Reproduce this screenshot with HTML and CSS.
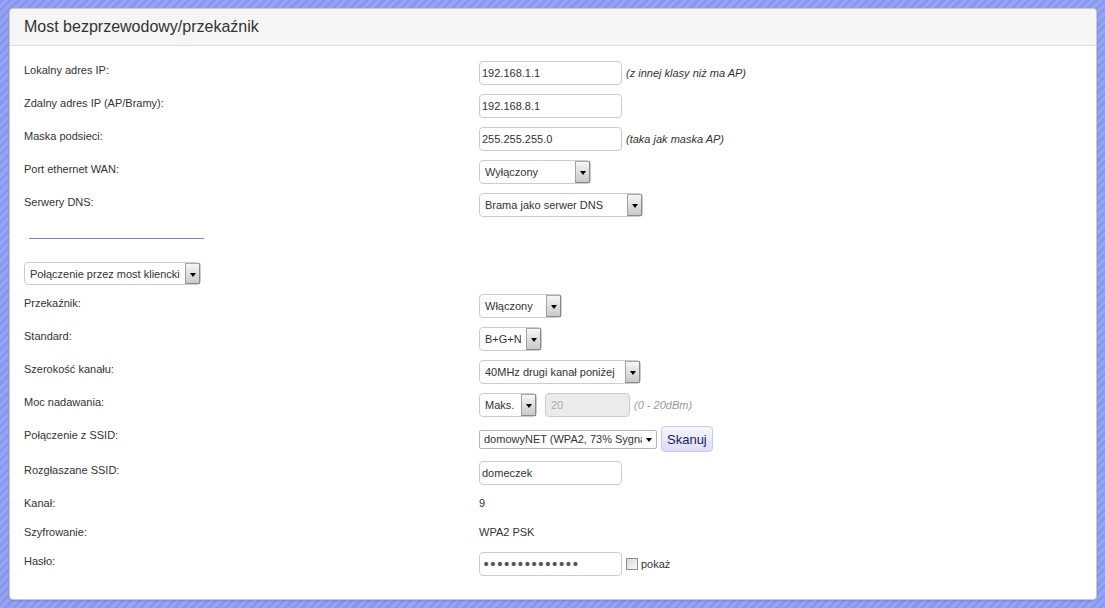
FILE: index.html
```html
<!DOCTYPE html>
<html lang="pl">

<head>
    <meta charset="UTF-8">
    <title>Most bezprzewodowy/przekaźnik</title>
    <link rel="stylesheet" href="styles.css">
</head>

<body>

    <div class="panel">
        <div class="panel-head">
            <h3>Most bezprzewodowy/przekaźnik</h3>
        </div>

        <div class="panel-body">
            <div class="row">
                <label for="lanIp">Lokalny adres IP:</label>
                <div class="ctl">
                    <input type="text" id="lanIp" class="txt" value="192.168.1.1">
                    <em class="note">(z innej klasy niż ma AP)</em>
                </div>
            </div>
            <div class="row">
                <label for="gwIp">Zdalny adres IP (AP/Bramy):</label>
                <div class="ctl">
                    <input type="text" id="gwIp" class="txt" value="192.168.8.1">
                </div>
            </div>
            <div class="row">
                <label for="mask">Maska podsieci:</label>
                <div class="ctl">
                    <input type="text" id="mask" class="txt" value="255.255.255.0">
                    <em class="note">(taka jak maska AP)</em>
                </div>
            </div>
            <div class="row">
                <label for="wan">Port ethernet WAN:</label>
                <div class="ctl">
                    <span class="dd dd-wan">
                        <select id="wan">
                            <option>Wyłączony</option>
                            <option>Włączony</option>
                        </select>
                    </span>
                </div>
            </div>
            <div class="row">
                <label for="dns">Serwery DNS:</label>
                <div class="ctl">
                    <span class="dd dd-dns">
                        <select id="dns">
                            <option>Brama jako serwer DNS</option>
                            <option>Własne serwery DNS</option>
                        </select>
                    </span>
                </div>
            </div>

            <div class="sep"></div>

            <!-- tryb pracy mostu -->
            <div class="row mode">
                <span class="dd dd-mode">
                    <select id="mode">
                        <option>Połączenie przez most kliencki</option>
                        <option>WDS</option>
                    </select>
                </span>
            </div>

            <div class="row">
                <label for="relay">Przekaźnik:</label>
                <div class="ctl">
                    <span class="dd dd-relay">
                        <select id="relay">
                            <option>Włączony</option>
                            <option>Wyłączony</option>
                        </select>
                    </span>
                </div>
            </div>
            <div class="row">
                <label for="std">Standard:</label>
                <div class="ctl">
                    <span class="dd dd-std">
                        <select id="std">
                            <option>B+G+N</option>
                            <option>B+G</option>
                            <option>N</option>
                        </select>
                    </span>
                </div>
            </div>
            <div class="row">
                <label for="bw">Szerokość kanału:</label>
                <div class="ctl">
                    <span class="dd dd-bw">
                        <select id="bw">
                            <option>40MHz drugi kanał poniżej</option>
                            <option>40MHz drugi kanał powyżej</option>
                            <option>20MHz</option>
                        </select>
                    </span>
                </div>
            </div>
            <div class="row">
                <label for="txMode">Moc nadawania:</label>
                <div class="ctl">
                    <span class="dd dd-tx">
                        <select id="txMode">
                            <option>Maks.</option>
                            <option>Własna</option>
                        </select>
                    </span>
                    <input type="text" class="txt txt-power" value="20" disabled>
                    <em class="note note-dim">(0 - 20dBm)</em>
                </div>
            </div>
            <div class="row">
                <label for="ssid">Połączenie z SSID:</label>
                <div class="ctl">
                    <span class="plain-dd">
                        <select id="ssid">
                            <option>domowyNET (WPA2, 73% Sygnał)</option>
                        </select>
                    </span>
                    <button class="btn">Skanuj</button>
                </div>
            </div>
            <div class="row">
                <label for="bcast">Rozgłaszane SSID:</label>
                <div class="ctl">
                    <input type="text" id="bcast" class="txt" value="domeczek">
                </div>
            </div>
            <div class="row plain">
                <label>Kanał:</label>
                <div class="ctl">9</div>
            </div>
            <div class="row plain">
                <label>Szyfrowanie:</label>
                <div class="ctl">WPA2 PSK</div>
            </div>
            <div class="row">
                <label for="pass">Hasło:</label>
                <div class="ctl">
                    <input type="password" id="pass" class="txt txt-pass" value="domeczek123456">
                    <input type="checkbox" id="showPass" class="chk">
                    <label for="showPass" class="chk-label">pokaż</label>
                </div>
            </div>
        </div>
    </div>

    <script>
        // pokaż / ukryj hasło
        document.getElementById('showPass').addEventListener('change', function () {
            var pass = document.getElementById('pass');
            pass.type = this.checked ? 'text' : 'password';
            pass.classList.toggle('txt-pass', !this.checked);
        });
    </script>

</body>

</html>
```

FILE: styles.css
```css
html,
body {
    height: 100%;
}

body {
    margin: 0;
    padding: 8px 8px 8px 9px;
    box-sizing: border-box;
    background: repeating-linear-gradient(135deg, #8898ef 0, #8898ef 3px, #96a5f3 3px, #96a5f3 6px);
    font-family: "Liberation Sans", Arial, sans-serif;
    font-size: 11px;
    color: #333;
}

.panel {
    height: 100%;
    box-sizing: border-box;
    background-color: #fff;
    border: 1px solid #c9c9c9;
    border-radius: 4px;
    box-shadow: 0 1px 2px rgba(0, 0, 0, 0.15);
    overflow: hidden;
}

.panel-head {
    background-color: #f5f5f5;
    border-bottom: 1px solid #ddd;
    padding: 9px 14px;
}

.panel-head h3 {
    margin: 0;
    font-size: 16px;
    font-weight: normal;
    line-height: 18px;
    color: #333;
}

.panel-body {
    padding: 15px 14px;
}

.row {
    display: flex;
    margin-bottom: 9px;
}

.row > label {
    width: 455px;
    flex: none;
    padding-top: 2px;
    line-height: 14px;
}

.ctl {
    display: flex;
    align-items: center;
    gap: 4px;
    min-height: 24px;
}

.row.plain {
    height: 20px;
}

.row.plain .ctl {
    min-height: 0;
    padding-top: 2px;
    line-height: 14px;
    align-items: flex-start;
}

.txt {
    width: 143px;
    height: 24px;
    box-sizing: border-box;
    margin: 0;
    padding: 0 2px;
    border: 1px solid #ccc;
    border-radius: 4px;
    font: inherit;
    color: #333;
    background-color: #fff;
    outline: none;
}

.txt-power {
    width: 85px;
    margin-left: 4px;
    padding-left: 5px;
}

.txt:disabled {
    background-color: #ebebeb;
    color: #a8a8a8;
}

.txt-pass {
    font-family: "DejaVu Sans", sans-serif;
    font-size: 14px;
    letter-spacing: -1.4px;
    color: #555;
}

.note {
    font-style: italic;
    color: #333;
}

.note-dim {
    color: #999;
}

/* rozwijane listy z przyciskiem strzałki */
.dd {
    position: relative;
    display: inline-block;
    height: 24px;
}

.dd select {
    appearance: none;
    -webkit-appearance: none;
    width: 100%;
    height: 100%;
    margin: 0;
    padding: 0 20px 0 5px;
    border: 1px solid #ccc;
    border-radius: 4px;
    background-color: #fff;
    font: inherit;
    color: #333;
    outline: none;
}

.dd::after {
    content: "";
    position: absolute;
    top: 1px;
    right: 1px;
    bottom: 1px;
    width: 15px;
    box-sizing: border-box;
    border: 1px solid #8a8a8a;
    border-top-color: #a8a8a8;
    border-left-color: #a0a0a0;
    background: linear-gradient(#f6f6f6, #c9c9c9);
    pointer-events: none;
}

.dd::before {
    content: "";
    position: absolute;
    top: 50%;
    right: 5px;
    margin-top: -1px;
    border-left: 3.5px solid transparent;
    border-right: 3.5px solid transparent;
    border-top: 4px solid #000;
    z-index: 1;
    pointer-events: none;
}

.dd-wan {
    width: 112px;
}

.dd-dns {
    width: 164px;
}

.dd-mode {
    width: 177px;
    height: 23px;
}

.dd-relay {
    width: 83px;
}

.dd-std {
    width: 63px;
}

.dd-bw {
    width: 162px;
}

.dd-tx {
    width: 58px;
}

/* zwykła lista bez ramki przycisku */
.plain-dd {
    position: relative;
    display: inline-block;
    width: 178px;
    height: 19px;
}

.plain-dd select {
    appearance: none;
    -webkit-appearance: none;
    width: 100%;
    height: 100%;
    margin: 0;
    padding: 0 14px 0 4px;
    border: 1px solid #b4b4b4;
    border-radius: 2px;
    background-color: #fff;
    font: inherit;
    color: #333;
    outline: none;
}

.plain-dd::after {
    content: "";
    position: absolute;
    top: 50%;
    right: 5px;
    margin-top: -1px;
    border-left: 3.5px solid transparent;
    border-right: 3.5px solid transparent;
    border-top: 4px solid #000;
    pointer-events: none;
}

.btn {
    height: 26px;
    margin: 0;
    padding: 0 5px;
    border: 1px solid #cacae2;
    border-radius: 4px;
    background: linear-gradient(#f6f6ff, #dcdcf6);
    font-family: inherit;
    font-size: 13px;
    color: #1d1d55;
    cursor: pointer;
}

.btn:hover {
    background: linear-gradient(#fafaff, #e4e4fa);
}

.chk {
    appearance: none;
    -webkit-appearance: none;
    width: 12px;
    height: 12px;
    margin: 0;
    border: 1px solid #8e8e8e;
    background: linear-gradient(135deg, #d6d6d6, #fbfbfb);
}

.chk:checked {
    background: #fff;
    box-shadow: inset 0 0 0 2px #fff, inset 0 0 0 6px #333;
}

.chk-label {
    margin-left: -1px;
}

.sep {
    width: 175px;
    margin: 21px 0 23px 5px;
    border-top: 1px solid #7f7fcc;
}
```
